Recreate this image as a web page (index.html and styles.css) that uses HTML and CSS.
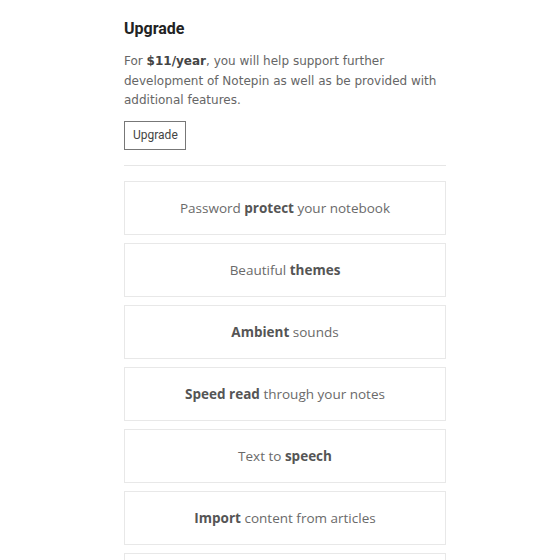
FILE: index.html
```html
<!DOCTYPE html>
<html lang="en">
<head>
  <meta charset="UTF-8">
  <title>Upgrade</title>
  <link rel="stylesheet" href="styles.css">
</head>
<body>
  <div class="container">
    <h2>Upgrade</h2>
    <p class="intro">For <b class="price">$11/year</b>, you will help support further development of Notepin as well as be provided with additional features.</p>
    <button class="upgrade-button">Upgrade</button>
    <hr>

    <div class="features">
      <div class="feature">Password <b>protect</b> your notebook</div>
      <div class="feature">Beautiful <b>themes</b></div>
      <div class="feature"><b>Ambient</b> sounds</div>
      <div class="feature"><b>Speed read</b> through your notes</div>
      <div class="feature">Text to <b>speech</b></div>
      <div class="feature"><b>Import</b> content from articles</div>
      <div class="feature">Export your <b>notes</b></div>
    </div>
  </div>
</body>
</html>
```

FILE: styles.css
```css
body {
  margin: 0;
  background-color: #fff;
}

.container {
  width: 322px;
  margin: 0 0 0 124px;
  padding-top: 19px;
}

h2 {
  font-family: Roboto, sans-serif;
  font-size: 16px;
  font-weight: bold;
  color: #222;
  margin: 0 0 13px 0;
  line-height: 20px;
}

.intro {
  font-family: "DejaVu Sans", Verdana, sans-serif;
  font-size: 12px;
  line-height: 19.5px;
  color: #666;
  margin: 0 0 10px 0;
}

.price {
  color: #444;
}

.upgrade-button {
  font-family: Roboto, sans-serif;
  font-size: 12px;
  color: #444;
  background: #fff;
  border: 1px solid #777;
  padding: 0 8px;
  height: 29px;
  width: 62px;
  cursor: pointer;
}

hr {
  border: none;
  border-top: 1px solid #e6e6e6;
  margin: 15px 0 15px 0;
}

.features {
  display: flex;
  flex-direction: column;
  gap: 8px;
}

.feature {
  font-family: "Open Sans", sans-serif;
  font-size: 13.5px;
  color: #6a6a6a;
  text-align: center;
  height: 52px;
  line-height: 52px;
  border: 1px solid #e8e8e8;
}

.feature b {
  color: #555;
  font-weight: bold;
}
```
